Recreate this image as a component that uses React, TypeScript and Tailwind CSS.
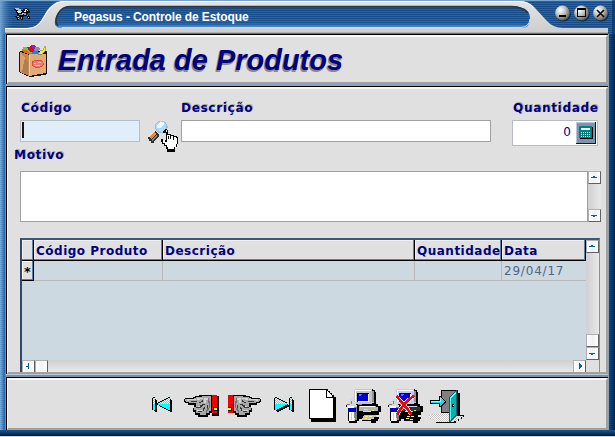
import type { ReactNode } from "react";

const labelFont = "font-['DejaVu_Sans',Verdana,sans-serif] font-bold text-[#000080]";

function Label({ children, className = "" }: { children: string; className?: string }) {
  return (
    <span className={`${labelFont} block whitespace-nowrap text-[12px] leading-[16px] tracking-[0.7px] [text-shadow:1px_-1px_0_#a8a8a8] ${className}`}>
      {children}
    </span>
  );
}

function Icon({ box, w, h, label, className = "", children }: { box: string; w: number; h: number; label: string; className?: string; children: ReactNode }) {
  return (
    <svg viewBox={box} width={w} height={h} shapeRendering="crispEdges" aria-label={label} className={`block shrink-0 ${className}`}>
      {children}
    </svg>
  );
}

function TitleFrame() {
  return (
    <svg width="615" height="34" viewBox="0 0 615 34" className="absolute left-0 top-0">
      <defs>
        <pattern id="stripe" width="4" height="2" patternUnits="userSpaceOnUse">
          <rect width="4" height="2" fill="#2663a6" />
          <rect width="4" height="1" fill="#174c88" />
        </pattern>
        <linearGradient id="left" x1="0" x2="1">
          <stop offset="0" stopColor="#8ab8e0" stopOpacity=".8" />
          <stop offset="1" stopColor="#2060a0" stopOpacity="0" />
        </linearGradient>
        <linearGradient id="inner" x1="0" x2="0" y1="0" y2="1">
          <stop offset="0" stopColor="#103860" stopOpacity=".6" />
          <stop offset=".3" stopColor="#2060a8" stopOpacity="0" />
          <stop offset=".8" stopColor="#2870c0" stopOpacity=".3" />
          <stop offset="1" stopColor="#68b0ec" />
        </linearGradient>
        <linearGradient id="metal" x1="0" x2="0" y1="0" y2="1">
          <stop offset="0" stopColor="#e4e4e4" />
          <stop offset="1" stopColor="#cccccc" />
        </linearGradient>
        <radialGradient id="ball" cx=".35" cy=".3" r=".75">
          <stop offset="0" stopColor="#fff" />
          <stop offset=".45" stopColor="#c4c4c0" />
          <stop offset="1" stopColor="#555" />
        </radialGradient>
      </defs>
      <rect width="615" height="34" fill="url(#stripe)" />
      <rect width="14" height="34" fill="url(#left)" />
      <rect width="615" height="1" fill="#79a5cc" />
      <rect x="612" width="3" height="34" fill="#062c58" opacity=".6" />
      <path d="M5 28H27C42 28 42 15 50 7Q56 1 62 1H520Q529 1 535 8L546 20Q553 28 563 28H608V34H5Z" fill="url(#metal)" />
      <path d="M5 28.5H27C42 28.5 43 15 51 7Q57 1.5 63 1.5H520Q528 1.5 534 8" fill="none" stroke="#fafafa" />
      <path d="M70 6H512Q530 7 530 18Q530 28 521 28H60Q54 27 55 21Q58 7 70 6Z" fill="url(#stripe)" />
      <path d="M70 6H512Q530 7 530 18Q530 28 521 28H60Q54 27 55 21Q58 7 70 6Z" fill="url(#inner)" />
      <path d="M58 26Q54 21 58 14Q62 6.5 70 6.5H512Q523 7 528 13" fill="none" stroke="#26384a" strokeWidth="1.6" />
      <path d="M62 27.5H521Q529 27 530 19" fill="none" stroke="#c4e2f6" />
      <rect x="5" y="32" width="603" height="1" fill="#b0b0b0" />
      <rect x="5" y="33" width="603" height="1" fill="#607080" />
      {[562.5, 581.5, 600.5].map((x) => (
        <g key={x}>
          <circle cx={x + 0.7} cy="14" r="7.6" fill="#06294e" />
          <circle cx={x} cy="13" r="7.4" fill="url(#ball)" />
        </g>
      ))}
      <g shapeRendering="crispEdges">
        <rect x="559" y="15" width="7" height="2" />
        <path d="M577 8H586V17H577ZM578 10V16H585V10Z" fillRule="evenodd" />
      </g>
      <path d="M597 10L604 17M604 10L597 17" stroke="#000" strokeWidth="1.6" />
    </svg>
  );
}

function Pegasus() {
  return (
    <Icon box="0 0 16 14" w={16} h={14} label="Pegasus" className="mt-[7px]">
      <path d="M1 1H5V2H7V3H9V2H11V1H13V2H15V4H16V6H14V7H13V8H15V9H16V12H14V11H13V9H10V10H9V13H7V12H6V10H5V13H3V11H2V10H1V9H3V6H2V4H1V3H0V2H1Z" fill="#101010" />
      <path d="M1 1H5V2H7V4H8V5H6V4H4V3H2V2H1Z" fill="#b8c4cc" />
      <path d="M3 4H6V5H7V6H4V5H3ZM11 2H13V3H12V5H10V4H11Z" fill="#e8ecee" />
      <path d="M5 7H9V8H5ZM10 6H12V8H10ZM3 9H5V10H3ZM7 10H8V12H7ZM13 8H14V9H13Z" fill="#9098a0" />
      <path d="M13 3H14V4H13ZM8 6H10V7H8ZM4 11H5V12H4ZM14 10H15V11H14Z" fill="#d0d0d0" />
    </Icon>
  );
}

function Bag() {
  return (
    <Icon box="57 135 84 96" w={28} h={32} label="Produtos">
      <path d="M60 153H141V222L132 225L90 231L81 228L57 216V159Z" fill="#20150c" />
      <path d="M60 156L87 165V228L60 216Z" fill="#c08a58" />
      <path d="M87 162H138V219L87 228Z" fill="#e3aa76" />
      <path d="M60 156L75 174L66 213L60 216Z" fill="#dba06c" />
      <path d="M75 174L84 186V225L66 216Z" fill="#b57c4c" />
      <path d="M87 165V228" stroke="#f4c89a" strokeWidth="3" />
      <path d="M66 147H75L87 153L99 162H84L69 156Z" fill="#f06010" />
      <path d="M69 141H78L93 150L99 159H90L78 150H69Z" fill="#50d060" />
      <path d="M81 141H90V138H99L105 150L99 156H90Z" fill="#d90818" />
      <path d="M93 135H102L108 141V147H99Z" fill="#8a20d0" />
      <path d="M105 141H117L120 147L111 156H102Z" fill="#8890a0" />
      <path d="M96 156L102 150L117 156V162H96Z" fill="#2080e8" />
      <path d="M135 138V153L126 162H114L120 153L129 150Z" fill="#ffec3c" stroke="#302010" />
      <ellipse cx="113" cy="191" rx="17" ry="11" fill="#ee7a70" stroke="#dc4848" strokeWidth="3" />
      <path d="M102 189H108M114 186H123M105 195H120" stroke="#ffc0a0" strokeWidth="3" />
    </Icon>
  );
}

function SearchPointer() {
  return (
    <Icon box="444 90 93 99" w={31} h={33} label="Pesquisar">
      <path d="M444 141H450V138L465 123L477 132V138L462 156V159H453V153H447V147H444Z" fill="#303030" />
      <path d="M447 141L462 126L468 132L453 147Z" fill="#f08a28" />
      <path d="M453 150L468 135L471 138L459 153Z" fill="#888" />
      <circle cx="484" cy="111" r="19" fill="#9fbfd4" />
      <circle cx="483" cy="110" r="16" fill="#a9dcf6" />
      <path d="M471 105L480 96H492V102L480 114H471Z" fill="#effaff" />
      <path d="M486 126L501 117V129H489Z" fill="#111" />
      <path d="M495 117H501V120H504V132H513V135H522V138H531V141H534V162H531V171H525V186H501V177H498V168H492V162H486V156H483V147H489V150H498V126H495Z" fill="#000" />
      <path d="M498 120H501V135H504V147H507V135H510V147H513V138H519V150H522V141H528V144H531V162H528V171H522V177H504V171H501V165H495V159H489V150H495V156H501V126H498Z" fill="#fff" />
      <path d="M504 135H510V147H507V138H504ZM513 138H519V150H516V141H513Z" fill="#fff" />
    </Icon>
  );
}

function Hand({ cuffShadow = false }: { cuffShadow?: boolean }) {
  return (
    <>
      <path d="M135 66H159V63H165V60H177V57H216V111H210V116H204V123H174V117H165V108H159V96H162V87H144V81H135V78H132V69H135Z" fill="#000" />
      {cuffShadow && <rect x="216" y="60" width="21" height="60" fill="#000" />}
      <path d="M135 69H162V66H168V63H186V60H213V105H207V111H198V117H180V111H168V102H162V93H168V81H147V78H138V75H135Z" fill="#a8a8a8" />
      <path d="M141 69H168V72H147V75H141ZM171 66H189V69H180V72H171ZM174 90H186V93H174ZM171 102H186V105H171ZM192 66H207V72H198V81H192Z" fill="#d4d4d4" />
      <path d="M153 75H171V78H153ZM186 72H189V78H183V81H177V78H183V75H186ZM186 84H195V87H189V90H186V93H183V96H168V93H180V87H186ZM192 93H195V99H192V105H186V108H174V105H189V96H192ZM201 87H204V96H201Z" fill="#383838" />
      <path d="M204 66H207V75H210V96H207V102H204V105H201V111H198V102H201V96H207V81H204Z" fill="#707070" />
      <rect x="213" y="57" width="3" height="54" fill="#000" />
      <rect x="216" y="57" width="15" height="54" fill="#f00000" />
      <rect x="219" y="93" width="12" height="12" fill="#111" />
      <rect x="222" y="96" width="9" height="6" fill="#ff0" />
    </>
  );
}

const triangle = "M18 10V22H16V21H14V20H12V19H10V18H8V17H6V15H8V14H10V13H12V12H14V11H16V10Z";
const bar = "M1 10H3V22H1Z";

function Skip({ forward = false }: { forward?: boolean }) {
  const flip = forward ? "translate(19 0) scale(-1 1)" : undefined;
  return (
    <>
      <defs>
        <pattern id="dither" width="2" height="2" patternUnits="userSpaceOnUse">
          <rect width="2" height="2" fill="#0ff" />
          <path d="M0 0H1V1H0ZM1 1H2V2H1Z" fill="#d8ffff" />
        </pattern>
        <clipPath id="upper">
          <rect y="9" width="22" height="7" />
        </clipPath>
      </defs>
      {["translate(-1 0)", "translate(0 -1)", "translate(1 1)", "translate(2 2)"].map((shift) => (
        <g key={shift} transform={shift}>
          <path d={triangle + bar} transform={flip} fill="#000" />
        </g>
      ))}
      <g transform={flip}>
        <path d={triangle + bar} fill="#0ff" />
        <path d={triangle + bar} fill="url(#dither)" clipPath="url(#upper)" />
      </g>
    </>
  );
}

function Computer({ cancel = false }: { cancel?: boolean }) {
  return (
    <>
      <path d="M165 39H219V42H225V48H228V84H234V90H243V108H237V117H228V123H237V129H234V135H228V141H213V135H186V129H177V135H171V141H147V135H144V93H138V81H150V75H162V42H165Z" fill="#000" />
      <path d="M165 39H216V45H222V81H216V84H168V81H162V42H165Z" fill={cancel ? "#c8c8f8" : "#c4c4c4"} />
      <path d="M165 42H213V45H168V78H165Z" fill="#fff" />
      <path d="M171 51H207V78H171Z" fill="#000" />
      <path d="M174 54H204V75H174Z" fill="#0000d0" />
      <path d="M174 75H207V78H174ZM204 54H207V78H204Z" fill="#f0f0f0" />
      <path d="M177 54H186V57H183V60H177Z" fill="#6070ff" />
      <path d="M216 45H222V78H216Z" fill="#909090" />
      <path d="M174 84H186V87H174Z" fill="#888" />
      <path d="M177 90H228V93H234V105H177Z" fill={cancel ? "#303030" : "#b4b4b4"} />
      <path d="M180 90H225V93H180Z" fill={cancel ? "#c8c8f8" : "#fff"} />
      <path d="M189 105H213V108H189ZM192 99H204V102H192ZM216 102H222V105H216Z" fill="#f4f400" />
      <path d="M192 117H228V123H222V129H213V132H186V126H189Z" fill={cancel ? "#000" : "#c0c0c0"} />
      <path d="M195 120H204V123H195ZM207 120H216V123H207ZM192 126H201V129H192ZM204 129H213V132H204Z" fill="#fff36a" />
      <path d="M138 81H144V75H150V69H156V66H159V72H162V78H168V87H171V93H165V135H147V93H141V87H138Z" fill="#d8d8d8" />
      <path d="M141 84H150V87H141ZM153 75H156V84H153ZM162 93H171V132H165V126H162Z" fill="#808080" />
      <path d="M144 90H162V96H144ZM147 108H162V135H147Z" fill="#fff" />
      <path d="M144 96H168V108H144Z" fill="#0000c8" />
      <path d="M153 111H156V132H153Z" fill="#c8c8c8" />
      {cancel && (
        <g fill="none">
          <path d="M163 60Q181 79 207 113M216 60Q187 78 166 115" stroke="#fff" strokeWidth="12" />
          <path d="M163 60Q181 79 208 114M216 59Q187 78 165 116" stroke="#f00" strokeWidth="8" />
        </g>
      )}
    </>
  );
}

function Door() {
  return (
    <>
      <defs>
        <pattern id="floor" width="6" height="6" patternUnits="userSpaceOnUse">
          <rect width="6" height="6" fill="#fff" />
          <path d="M0 0H3V3H0ZM3 3H6V6H3Z" fill="#c4c4c4" />
        </pattern>
      </defs>
      <path d="M474 51H480V117H492V123H486V129H477V135H468V141H408V138H450L474 117Z" fill="#000" />
      <path d="M387 117H396V114H426V111H447V120H489V123H483V129H474V135H462V138H408V135H399V129H390V123H387Z" fill="url(#floor)" />
      <path d="M423 42H474V117H468V111H423Z" fill="#000" />
      <path d="M426 45H468V108H426Z" fill="#808080" />
      <path d="M447 63H450V60H453V57H456V54H459V51H462V48H465V45H468V42H471V120H468V123H465V126H462V129H459V132H456V135H453V138H447Z" fill="#006870" />
      <path d="M450 63H453V60H456V57H459V54H462V51H465V48H468V117H465V120H462V123H459V126H456V129H453V135H450Z" fill="#00b0b4" />
      <path d="M450 63H453V132H450ZM453 60H456V57H459V54H462V51H465V48H468V54H465V57H462V60H459V63H456V66H453Z" fill="#50ffff" />
      <path d="M456 84H462V93H456Z" fill="#000" />
      <path d="M459 87H462V90H459Z" fill="#fff" />
      <path d="M390 72H417V60H423V63H426V66H429V69H432V72H435V75H438V81H435V84H432V87H429V90H426V93H417V84H390Z" fill="#000" />
      <path d="M393 75H420V63H423V66H426V69H429V72H432V75H435V78H432V81H429V84H426V87H423V90H420V81H393Z" fill="#00e5f0" />
      <path d="M393 75H420V66H423V78H393Z" fill="#90ffff" />
    </>
  );
}

type Dir = "up" | "down" | "left" | "right";
const arrows: Record<Dir, string> = {
  up: "M2 5H4V4H6V5H8V6H2Z",
  down: "M2 5H8V6H6V7H4V6H2Z",
  left: "M5 2H6V8H5V6H3V5H5Z",
  right: "M5 2H6V3H7V4H8V6H7V7H6V8H5Z",
};

function ScrollButton({ dir }: { dir?: Dir }) {
  return (
    <span className="block h-[13px] w-[13px] shrink-0 border-b border-r border-[#606060] border-l border-t border-l-[#b0b0b0] border-t-[#b0b0b0] bg-linear-to-r from-white via-[#f1f1f1] to-white">
      {dir && (
        <svg width="11" height="11" viewBox="0 0 11 11" shapeRendering="crispEdges" className="block">
          <path d={arrows[dir]} fill="#08658f" />
        </svg>
      )}
    </span>
  );
}

function Panel({ className, children }: { className: string; children: ReactNode }) {
  return (
    <section className={`shrink-0 overflow-hidden border-b-2 border-l border-r-2 border-t-2 border-b-[#a0a09e] border-l-[#f8f8f8] border-r-[#a0a09e] border-t-[#f8f8f8] bg-[#e0e0e0] ${className}`}>
      {children}
    </section>
  );
}

const headerCell = `${labelFont} h-full shrink-0 overflow-hidden whitespace-nowrap border-r border-black text-[12px] leading-[22px] tracking-[0.5px] pl-[2px] shadow-[inset_-1px_-1px_0_#6080a8,inset_1px_1px_0_#f0f0f0] bg-[#e0e0e0]`;

export default function App() {
  return (
    <main className="flex h-[437px] w-[615px] flex-col overflow-hidden bg-[#0a3565]">
      <header className="relative flex h-[34px] shrink-0">
        <TitleFrame />
        <div className="relative flex pl-[14px]">
          <Pegasus />
          <h1 className="ml-[44px] mt-[9px] whitespace-nowrap font-['Liberation_Sans',Arial,sans-serif] text-[12px] font-bold leading-[16px] tracking-[-0.1px] text-white">
            Pegasus - Controle de Estoque
          </h1>
        </div>
      </header>
      <div className="flex h-[396px] shrink-0">
        <div className="w-[5px] shrink-0 bg-[repeating-linear-gradient(0deg,#ffffff18_0_1px,transparent_1px_2px),linear-gradient(90deg,#73a8d8,#1c5898)]" />
        <div className="flex w-[603px] shrink-0 flex-col border-l border-[#7890a8]">
          <div className="flex flex-col border-l border-t border-black">
            <Panel className="h-[49px]">
              <div className="flex pl-[11px] pt-[8px]">
                <Bag />
                <h2 className="ml-[11px] mt-[-1px] whitespace-nowrap font-['Liberation_Sans',Arial,sans-serif] text-[29px] font-bold italic leading-[32px] text-[#000080] [text-shadow:-1px_1px_0_#888,-1px_2px_0_#888]">
                  Entrada de Produtos
                </h2>
              </div>
            </Panel>
          </div>
          <div className="h-[2px] shrink-0 bg-[#8aa2bc]" />
          <div className="flex flex-col border-l border-t border-black">
            <Panel className="h-[287px]">
              <div className="flex h-[58px] pl-[12px] pt-[11px]">
                <div className="w-[120px] shrink-0">
                  <Label className="pl-[1px]">Código</Label>
                  <div className="mt-[4px] flex h-[22px] w-[120px] border border-[#b3bfca] bg-[#e0eefa] pl-[1px] pt-[1px]">
                    <span className="h-[16px] w-[2px] bg-[#20100c]" />
                  </div>
                </div>
                <div className="ml-[8px] mt-[20px] w-[31px] shrink-0">
                  <SearchPointer />
                </div>
                <div className="ml-[2px] w-[310px] shrink-0">
                  <Label>Descrição</Label>
                  <div className="mt-[4px] h-[22px] border border-[#a0a0a0] bg-white" />
                </div>
                <div className="ml-[21px] w-[86px] shrink-0">
                  <Label className="pl-[1px]">Quantidade</Label>
                  <div className="mt-[4px] flex h-[26px] justify-end border border-[#b8bcc2] bg-white pr-px pt-px">
                    <span className="mr-[5px] font-['DejaVu_Sans',Verdana,sans-serif] text-[12px] leading-[20px] text-[#000080]">0</span>
                    <svg width="20" height="22" viewBox="0 0 20 22" shapeRendering="crispEdges">
                      <path d="M0 0H20V22H0Z" fill="#101820" />
                      <path d="M0 0H19V21H0Z" fill="#b8c8d8" />
                      <path d="M1 1H19V21H1Z" fill="#7d94ae" />
                      <path d="M4 5H17V17H4Z" fill="#000" />
                      <path d="M3 4H16V16H3Z" fill="#00807f" />
                      <path d="M5 6H14V8H5Z" fill="#eee" />
                      <path d="M5 10h1v1H5zM7 10h1v1H7zM9 10h1v1H9zM11 10h1v1h-1zM13 10h1v1h-1zM5 12h1v1H5zM7 12h1v1H7zM9 12h1v1H9zM11 12h1v1h-1zM13 12h1v1h-1zM5 14h1v1H5zM7 14h1v1H7zM9 14h1v1H9zM11 14h1v1h-1zM13 14h1v1h-1z" fill="#fff" />
                    </svg>
                  </div>
                </div>
              </div>
              <div className="pl-[6px]">
                <Label>Motivo</Label>
              </div>
              <div className="mt-[8px] flex h-[51px] pl-[12px]">
                <div className="w-[568px] border border-[#a0a0a0] bg-white" />
                <div className="flex w-[13px] flex-col justify-between bg-linear-to-r from-[#d0d0d0] to-[#e8e8e8]">
                  <ScrollButton dir="up" />
                  <ScrollButton dir="down" />
                </div>
              </div>
              <div className="ml-[12px] mt-[16px] flex h-[134px] w-[580px] border-l-2 border-r border-t-2 border-l-[#304968] border-r-[#7890b4] border-t-[#405878] bg-[#cdd9e1]">
                <div className="flex w-[564px] shrink-0 flex-col">
                  <div className="flex h-[21px] shrink-0 border-b border-black">
                    <div className={`${headerCell} w-[12px]`} />
                    <div className={`${headerCell} w-[129px]`}>Código Produto</div>
                    <div className={`${headerCell} w-[252px]`}>Descrição</div>
                    <div className={`${headerCell} w-[87px]`}>Quantidade</div>
                    <div className={`${headerCell} w-[84px]`}>Data</div>
                  </div>
                  <div className="flex h-[20px] shrink-0 border-b border-[#b8b8b8]">
                    <div className="h-[20px] w-[12px] border-b border-r border-black bg-[#e0e0e0] text-center font-['DejaVu_Sans',sans-serif] text-[13px] font-bold leading-[22px] shadow-[inset_-1px_-1px_0_#6080a8,inset_1px_1px_0_#f8f8f8]">*</div>
                    <div className="w-[129px] border-r border-[#b8b8b8]" />
                    <div className="w-[252px] border-r border-[#b8b8b8]" />
                    <div className="w-[87px] border-r border-[#b8b8b8]" />
                    <div className="pl-[2px] font-['DejaVu_Sans',Verdana,sans-serif] text-[12px] leading-[21px] tracking-[0.8px] text-[#526683]">29/04/17</div>
                  </div>
                  <div className="flex-1" />
                  <div className="flex h-[12px] shrink-0 overflow-hidden bg-linear-to-b from-[#cfcfcf] to-[#e8e8e8]">
                    <ScrollButton dir="left" />
                    <ScrollButton />
                    <span className="flex-1" />
                    <ScrollButton dir="right" />
                  </div>
                </div>
                <div className="flex w-[13px] shrink-0 flex-col bg-[#e0e0e0]">
                  <div className="flex h-[120px] flex-col bg-linear-to-r from-[#d0d0d0] to-[#e8e8e8]">
                    <ScrollButton dir="up" />
                    <span className="flex-1" />
                    <ScrollButton />
                    <ScrollButton dir="down" />
                  </div>
                </div>
              </div>
            </Panel>
          </div>
          <div className="h-[3px] shrink-0 border-t border-[#bcc6d0] bg-[#7890aa]" />
          <div className="flex flex-col border-l border-t border-black">
            <Panel className="h-[52px]">
              <nav className="flex pl-[144px] pt-[8px]">
                <Icon box="0 0 22 36" w={22} h={36} label="Primeiro"><Skip /></Icon>
                <Icon box="132 36 108 108" w={36} h={36} label="Anterior" className="ml-[10px]"><Hand cuffShadow /></Icon>
                <Icon box="126 36 108 108" w={36} h={36} label="Próximo" className="ml-[7px] -scale-x-100"><Hand /></Icon>
                <Icon box="0 0 23 36" w={23} h={36} label="Último" className="ml-[11px]"><Skip forward /></Icon>
                <Icon box="24 36 87 108" w={29} h={36} label="Novo" className="ml-[11px]">
                  <path d="M33 45H87V51H93V57H99V63H108V138H33Z" fill="#000" />
                  <path d="M27 39H84V45H90V51H96V57H102V129H27Z" fill="#000" />
                  <path d="M30 42H78V66H99V126H30Z" fill="#fff" />
                  <path d="M81 45H84V48H87V51H90V54H93V57H96V63H81Z" fill="#fff" />
                </Icon>
                <Icon box="135 36 111 108" w={37} h={36} label="Salvar" className="ml-[8px]"><Computer /></Icon>
                <Icon box="138 36 108 108" w={36} h={36} label="Cancelar" className="ml-[6px]"><Computer cancel /></Icon>
                <Icon box="387 36 108 108" w={36} h={36} label="Sair" className="ml-[5px]"><Door /></Icon>
              </nav>
            </Panel>
          </div>
        </div>
        <div className="w-[1px] shrink-0 bg-[#8aa0b8]" />
        <div className="flex-1 bg-[repeating-linear-gradient(0deg,#00000030_0_1px,transparent_1px_2px),linear-gradient(90deg,#17518a,#052747)]" />
      </div>
      <footer className="h-[7px] shrink-0 border-b border-[#d0d8e0] bg-linear-to-b from-[#1b5890] to-[#021d38]" />
    </main>
  );
}
